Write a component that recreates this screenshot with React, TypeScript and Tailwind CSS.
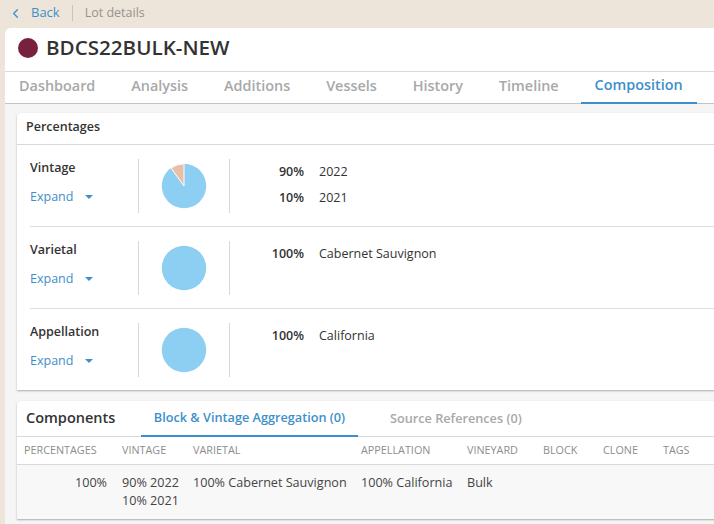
import { ChevronLeft } from 'lucide-react';

const tabs = ['Dashboard', 'Analysis', 'Additions', 'Vessels', 'History', 'Timeline', 'Composition'];

const sections = [
  { label: 'Vintage', split: true, rows: [['90%', '2022'], ['10%', '2021']] },
  { label: 'Varietal', split: false, rows: [['100%', 'Cabernet Sauvignon']] },
  { label: 'Appellation', split: false, rows: [['100%', 'California']] },
];

const columns = ['PERCENTAGES', 'VINTAGE', 'VARIETAL', 'APPELLATION', 'VINEYARD', 'BLOCK', 'CLONE', 'TAGS'];

function Pie({ split }: { split: boolean }) {
  return (
    <svg width="46" height="46" viewBox="0 0 46 46" aria-hidden="true">
      <circle cx="23" cy="23" r="22.2" fill="#8ccff3" />
      {split && (
        <path d="M23 23 L23 .8 A22.2 22.2 0 0 0 9.95 5.04 Z" fill="#e8c0a6" stroke="#fff" strokeWidth="1" />
      )}
    </svg>
  );
}

export default function App() {
  return (
    <div className="w-[714px] h-[524px] overflow-hidden bg-[#ede5d9] text-[#333] font-['Open_Sans',sans-serif]">
      {/* Breadcrumb */}
      <div className="h-7 flex items-center text-[13px] pb-[2px]">
        <ChevronLeft size={15} strokeWidth={2} className="ml-2 text-[#3d8fcb]" />
        <span className="ml-[8px] text-[#3d8fcb]">Back</span>
        <span className="ml-3 h-4 w-px bg-[#c9c4bb]" />
        <span className="ml-3 text-[#97938c] text-[12.5px]">Lot details</span>
      </div>

      <div className="ml-[5px] w-[760px] h-[496px] bg-[#f5f5f5] rounded-tl-md overflow-hidden">
        {/* Title */}
        <div className="h-11 bg-white border-b border-[#d9d9d9] flex items-center pl-[13px] pb-[4px]">
          <span className="w-5 h-5 rounded-full bg-[#77203f]" />
          <h1 className="ml-2 text-[20.6px] font-semibold text-[#333] leading-none">BDCS22BULK-NEW</h1>
        </div>

        {/* Tabs */}
        <div className="h-[32px] bg-white border-b border-[#c4c4c4] flex gap-2 text-[14.4px] font-semibold text-[#a8a8a8]">
          {tabs.map((tab) => (
            <div
              key={tab}
              className={
                tab === 'Composition'
                  ? 'px-3.5 h-[32px] pb-[3.5px] flex items-center border-b-2 border-[#3d8fcb] text-[#3d8fcb]'
                  : 'px-3.5 h-[32px] pb-[3.5px] flex items-center'
              }
            >
              {tab}
            </div>
          ))}
        </div>

        {/* Percentages */}
        <div className="ml-3 mt-[9px] bg-white rounded-t-sm shadow-[0_1px_2px_rgba(0,0,0,0.3)]">
          <div className="h-8 border-b border-[#d9d9d9] flex items-center pl-[9px] pb-[2px] text-[12.5px] font-semibold">
            Percentages
          </div>
          <div className="pl-[13px]">
            {sections.map((section, i) => (
              <div
                key={section.label}
                className={
                  i < 2
                    ? 'h-[82px] flex items-center border-b border-[#dedede]'
                    : 'h-[81px] flex items-center'
                }
              >
                <div className="w-[109px] h-[54px] border-r border-[#d9d9d9] shrink-0">
                  <div className="text-[12.5px] font-semibold leading-[18px]">{section.label}</div>
                  <div className="mt-[11px] flex items-center text-[12.5px] text-[#3d8fcb] leading-[18px]">
                    Expand
                    <span className="ml-[12px] w-0 h-0 border-x-[4px] border-x-transparent border-t-[4px] border-t-[#3d8fcb]" />
                  </div>
                </div>
                <div className="w-[91px] h-[54px] border-r border-[#d9d9d9] shrink-0 flex items-center justify-center">
                  <Pie split={section.split} />
                </div>
                <div className="h-[54px] pt-1 flex flex-col gap-2 text-[12.5px] leading-[18px]">
                  {section.rows.map(([pct, name]) => (
                    <div key={name} className="flex">
                      <span className="w-[74px] text-right font-semibold">{pct}</span>
                      <span className="ml-[15px]">{name}</span>
                    </div>
                  ))}
                </div>
              </div>
            ))}
          </div>
        </div>

        {/* Components */}
        <div className="ml-3 mt-[11px] bg-white rounded-t-sm shadow-[0_1px_2px_rgba(0,0,0,0.3)]">
          <div className="h-[36px] border-b border-[#d9d9d9] flex pl-[9px]">
            <div className="w-[115px] pb-[2px] text-[14.5px] font-semibold flex items-center">Components</div>
            <div className="w-[217px] h-[36px] border-b-2 border-[#3d8fcb] text-[#3d8fcb] text-[12.7px] font-semibold flex items-center justify-center">
              Block &amp; Vintage Aggregation (0)
            </div>
            <div className="ml-[32px] text-[12.7px] font-semibold text-[#a8a8a8] flex items-center">
              Source References (0)
            </div>
          </div>
          <div className="grid grid-cols-[98px_71px_168px_106px_76px_60px_60px_1fr] pl-[7px] h-7 items-center border-b border-[#d9d9d9] text-[10.8px] text-[#8d8d8d]">
            {columns.map((col) => (
              <div key={col}>{col}</div>
            ))}
          </div>
          <div className="grid grid-cols-[98px_71px_168px_106px_76px_60px_60px_1fr] pl-[7px] pt-[9px] h-[54px] bg-[#f8f8f8] text-[12.6px] leading-[18px] text-[#444]">
            <div className="pr-[15px] text-right">100%</div>
            <div>
              90% 2022
              <br />
              10% 2021
            </div>
            <div>100% Cabernet Sauvignon</div>
            <div>100% California</div>
            <div>Bulk</div>
          </div>
        </div>
      </div>
    </div>
  );
}
